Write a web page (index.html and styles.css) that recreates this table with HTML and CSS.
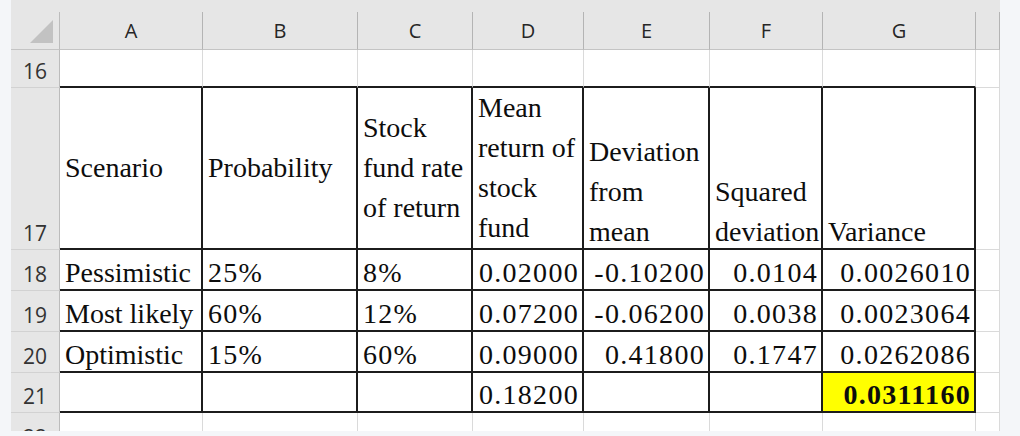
FILE: index.html
```html
<!DOCTYPE html>
<html>
<head>
<meta charset="utf-8">
<link rel="stylesheet" href="styles.css">
</head>
<body>
<div class="sheet">
  <div class="topband"></div>
  <div class="grid">
    <div class="corner"><svg width="49" height="38" viewBox="0 0 49 38"><polygon points="42,8 42,31 19,31" fill="#c2c2c2"/></svg></div>
    <div class="colhdr">A</div>
    <div class="colhdr">B</div>
    <div class="colhdr">C</div>
    <div class="colhdr">D</div>
    <div class="colhdr">E</div>
    <div class="colhdr">F</div>
    <div class="colhdr">G</div>
    <div class="colhdr"></div>

    <div class="rowhdr">16</div>
    <div class="cell top"></div>
    <div class="cell top"></div>
    <div class="cell top"></div>
    <div class="cell top"></div>
    <div class="cell top"></div>
    <div class="cell top"></div>
    <div class="cell top"></div>
    <div class="cell"></div>

    <div class="rowhdr">17</div>
    <div class="cell tb mid"><span class="hl">Scenario</span></div>
    <div class="cell tb mid"><span class="hl">Probability</span></div>
    <div class="cell tb mid"><span class="hl">Stock<br>fund rate<br>of return</span></div>
    <div class="cell tb mid"><span class="hl">Mean<br>return of<br>stock<br>fund</span></div>
    <div class="cell tb"><span class="hl bot">Deviation<br>from<br>mean</span></div>
    <div class="cell tb"><span class="hl bot">Squared<br>deviation</span></div>
    <div class="cell tb"><span class="hl bot">Variance</span></div>
    <div class="cell"></div>

    <div class="rowhdr">18</div>
    <div class="cell tb"><span class="v">Pessimistic</span></div>
    <div class="cell tb"><span class="v n">25%</span></div>
    <div class="cell tb"><span class="v n">8%</span></div>
    <div class="cell tb num"><span class="v n">0.02000</span></div>
    <div class="cell tb num"><span class="v n">-0.10200</span></div>
    <div class="cell tb num"><span class="v n">0.0104</span></div>
    <div class="cell tb num"><span class="v n">0.0026010</span></div>
    <div class="cell"></div>

    <div class="rowhdr">19</div>
    <div class="cell tb"><span class="v">Most likely</span></div>
    <div class="cell tb"><span class="v n">60%</span></div>
    <div class="cell tb"><span class="v n">12%</span></div>
    <div class="cell tb num"><span class="v n">0.07200</span></div>
    <div class="cell tb num"><span class="v n">-0.06200</span></div>
    <div class="cell tb num"><span class="v n">0.0038</span></div>
    <div class="cell tb num"><span class="v n">0.0023064</span></div>
    <div class="cell"></div>

    <div class="rowhdr">20</div>
    <div class="cell tb"><span class="v">Optimistic</span></div>
    <div class="cell tb"><span class="v n">15%</span></div>
    <div class="cell tb"><span class="v n">60%</span></div>
    <div class="cell tb num"><span class="v n">0.09000</span></div>
    <div class="cell tb num"><span class="v n">0.41800</span></div>
    <div class="cell tb num"><span class="v n">0.1747</span></div>
    <div class="cell tb num"><span class="v n">0.0262086</span></div>
    <div class="cell"></div>

    <div class="rowhdr">21</div>
    <div class="cell tb"></div>
    <div class="cell tb"></div>
    <div class="cell tb"></div>
    <div class="cell tb num"><span class="v n">0.18200</span></div>
    <div class="cell tb"></div>
    <div class="cell tb"></div>
    <div class="cell tb num total"><span class="v n">0.0311160</span></div>
    <div class="cell"></div>

    <div class="rowhdr">22</div>
    <div class="cell"></div>
    <div class="cell"></div>
    <div class="cell"></div>
    <div class="cell"></div>
    <div class="cell"></div>
    <div class="cell"></div>
    <div class="cell"></div>
    <div class="cell"></div>
  </div>
</div>
</body>
</html>
```

FILE: styles.css
```css
html, body {
  margin: 0;
  padding: 0;
}
body {
  background: #f4f6f9;
  width: 1020px;
  height: 436px;
  overflow: hidden;
}
.sheet {
  margin-left: 11px;
  width: 989px;
  height: 431px;
  overflow: hidden;
  background: #ffffff;
}
.topband {
  height: 12px;
  background: #e6e6e6;
}
.grid {
  display: grid;
  grid-template-columns: 49px 143px 155px 115px 111px 126px 113px 153px 24px;
  grid-template-rows: 38px 38px 162px 41px 41px 41px 40px 41px;
}
.grid > div {
  box-sizing: border-box;
  overflow: hidden;
}
.corner {
  background: #e6e6e6;
  border-right: 1px solid #bcbcbc;
  border-bottom: 1px solid #c4c4c4;
}
.corner svg {
  display: block;
}
.colhdr {
  background: #e6e6e6;
  border-right: 1px solid #b4b4b4;
  border-bottom: 1px solid #c4c4c4;
  display: flex;
  align-items: center;
  justify-content: center;
  font-family: "Open Sans", "Liberation Sans", sans-serif;
  font-size: 20px;
  color: #262626;
}
.rowhdr {
  background: #e6e6e6;
  border-right: 1px solid #bcbcbc;
  border-bottom: 1px solid #d2d2d2;
  display: flex;
  align-items: flex-end;
  justify-content: center;
  padding-bottom: 3px;
  font-family: "Open Sans", "Liberation Sans", sans-serif;
  font-size: 21px;
  line-height: 26px;
  color: #333333;
}
.cell {
  border-right: 1px solid #dadada;
  border-bottom: 1px solid #dadada;
  display: flex;
  align-items: flex-end;
  padding: 0 3px 0 5px;
  font-family: "Liberation Serif", "Times New Roman", serif;
  font-size: 28px;
  color: #0d0d0d;
  white-space: nowrap;
}
.cell.top {
  border-bottom: 2px solid #1c1c1c;
}
.cell.tb {
  border-right: 2px solid #1c1c1c;
  border-bottom: 2px solid #1c1c1c;
}
.cell.mid {
  align-items: center;
}
.cell.num {
  justify-content: flex-end;
  padding-right: 3px;
}
.hl {
  line-height: 40px;
}
.bot {
  margin-bottom: -4px;
}
.v {
  line-height: 40px;
  margin-bottom: -4px;
}
.n {
  letter-spacing: 1.3px;
}
.total {
  background: #ffff00;
  font-weight: bold;
}
```
